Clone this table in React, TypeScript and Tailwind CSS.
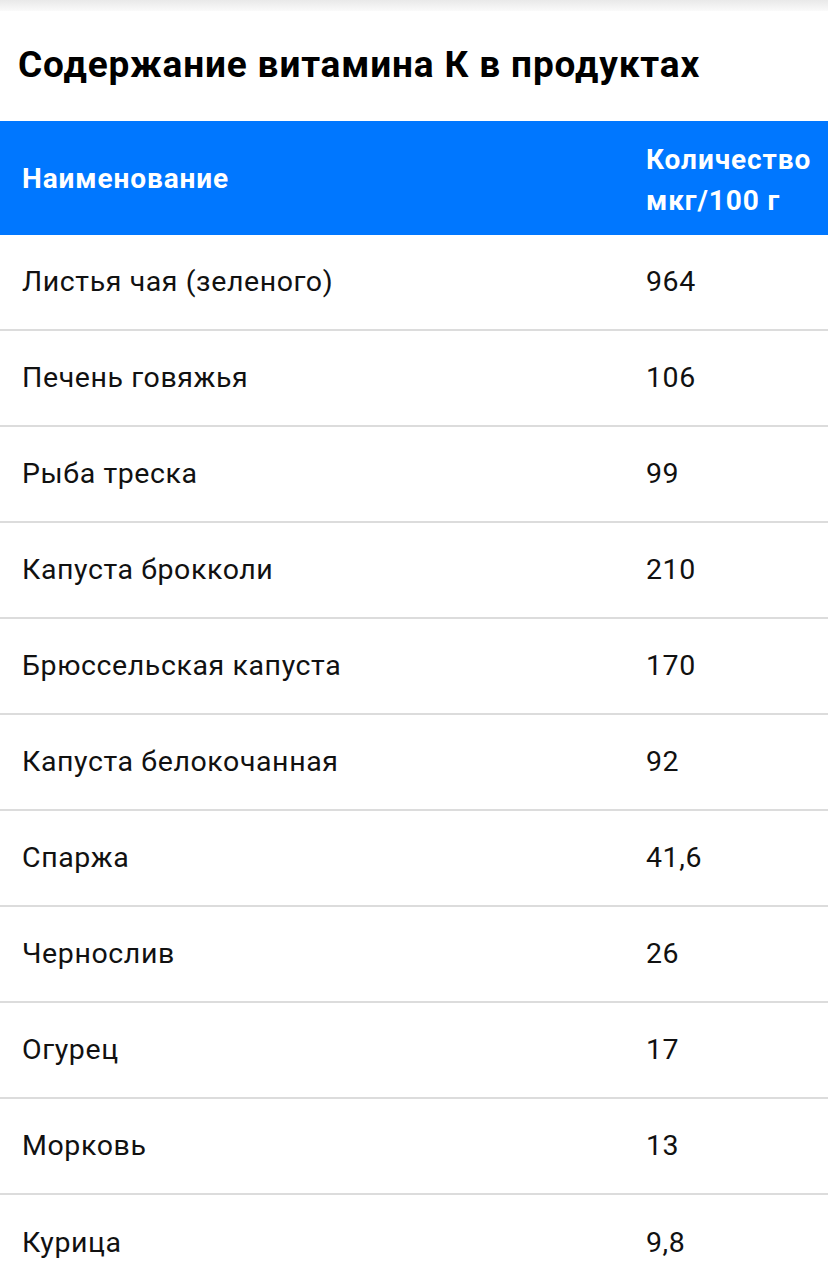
import React from 'react';

// ── Data ─────────────────────────────────────────────────────────────────────

const rows: [string, string][] = [
  ['Листья чая (зеленого)', '964'],
  ['Печень говяжья', '106'],
  ['Рыба треска', '99'],
  ['Капуста брокколи', '210'],
  ['Брюссельская капуста', '170'],
  ['Капуста белокочанная', '92'],
  ['Спаржа', '41,6'],
  ['Чернослив', '26'],
  ['Огурец', '17'],
  ['Морковь', '13'],
  ['Курица', '9,8'],
];

// ── Component ────────────────────────────────────────────────────────────────

const App: React.FC = () => {
  return (
    <div className="w-[828px] min-h-[1280px] bg-white font-['Roboto','Noto_Sans',sans-serif] text-black overflow-hidden">
      {/* Top shadow strip */}
      <div className="h-[11px] bg-gradient-to-b from-[#e9e9e9] to-[#fafafa]" />

      {/* Title */}
      <div className="h-[110px] flex items-center pl-[18px] pb-[4px]">
        <h2 className="text-[37px] font-bold tracking-[0.85px] leading-none">
          Содержание витамина К в продуктах
        </h2>
      </div>

      {/* Table header */}
      <div className="grid grid-cols-[646px_1fr] bg-[#0077ff] text-white font-bold text-[28px] tracking-[0.9px] leading-[41px] h-[114px] items-center">
        <div className="pl-[22px]">Наименование</div>
        <div className="pt-[4px]">
          Количество
          <br />
          мкг/100 г
        </div>
      </div>

      {/* Rows */}
      {rows.map(([name, value], i) => (
        <div
          key={name}
          className={`grid grid-cols-[646px_1fr] items-center h-[96px] text-[28.5px] tracking-[0.6px] text-[#111] ${
            i < rows.length - 1 ? 'border-b-2 border-[#dcdcdc]' : ''
          }`}
        >
          <div className="pl-[22px]">{name}</div>
          <div>{value}</div>
        </div>
      ))}
    </div>
  );
};

export default App;
